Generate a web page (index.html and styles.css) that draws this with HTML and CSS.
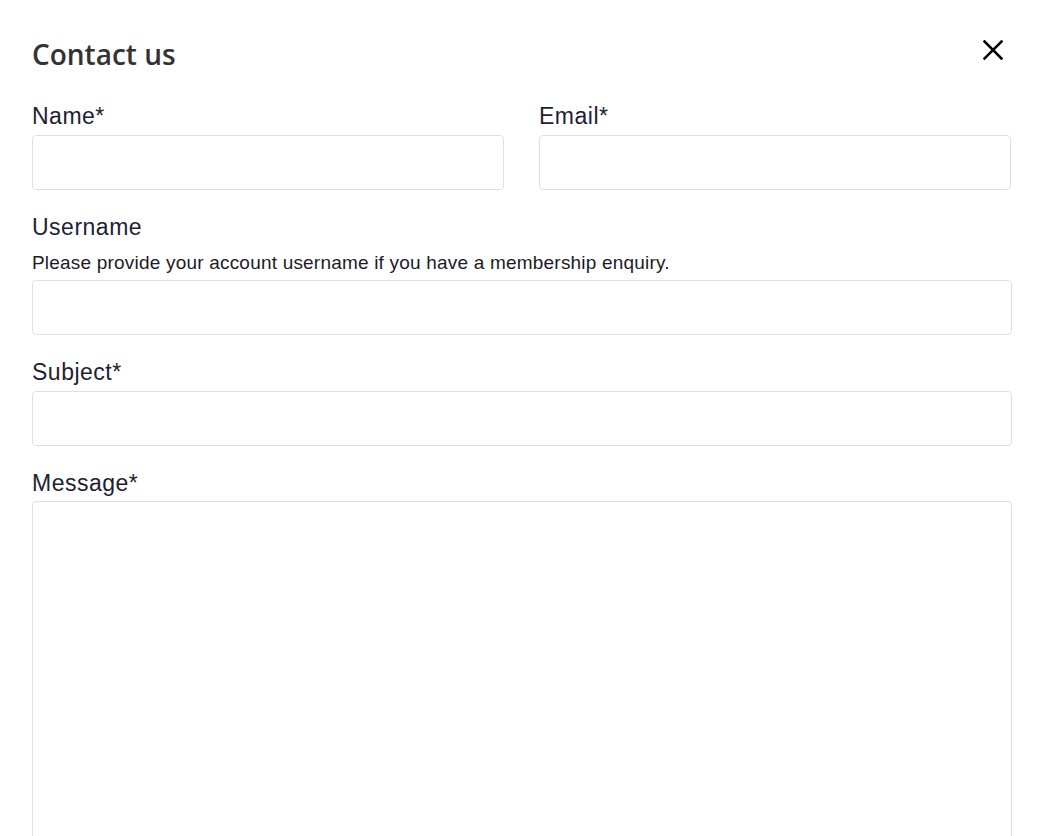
FILE: index.html
```html
<!DOCTYPE html>
<html lang="en">
<head>
<meta charset="utf-8">
<title>Contact us</title>
<link rel="stylesheet" href="styles.css">
</head>
<body>
<div class="modal">
  <header class="modal-header">
    <h1 class="title">Contact us</h1>
    <button class="close" type="button" aria-label="Close">
      <svg width="20" height="20" viewBox="0 0 20 20" aria-hidden="true">
        <path d="M1.5 1.5 L18.5 18.5 M18.5 1.5 L1.5 18.5" stroke="#000" stroke-width="2.5" stroke-linecap="square" fill="none"/>
      </svg>
    </button>
  </header>
  <form class="form">
    <div class="row two">
      <div class="field">
        <label class="label" for="name">Name*</label>
        <input class="input" id="name" type="text">
      </div>
      <div class="field">
        <label class="label" for="email">Email*</label>
        <input class="input" id="email" type="email">
      </div>
    </div>
    <div class="field">
      <label class="label" for="username">Username</label>
      <p class="help">Please provide your account username if you have a membership enquiry.</p>
      <input class="input" id="username" type="text">
    </div>
    <div class="field">
      <label class="label" for="subject">Subject*</label>
      <input class="input" id="subject" type="text">
    </div>
    <div class="field">
      <label class="label label-tight" for="message">Message*</label>
      <textarea class="input textarea" id="message"></textarea>
    </div>
  </form>
</div>
</body>
</html>
```

FILE: styles.css
```css
html, body {
  margin: 0;
  padding: 0;
  background: #fff;
}

body {
  font-family: "Liberation Sans", Arial, sans-serif;
  color: #221e33;
}

.modal {
  padding: 37px 34px 0 32px;
}

.modal-header {
  display: flex;
  justify-content: space-between;
  align-items: flex-start;
  margin-bottom: 32px;
}

.title {
  margin: 0;
  font-family: "Open Sans", sans-serif;
  font-weight: 600;
  font-size: 28px;
  line-height: 34px;
  color: #333;
}

.close {
  border: 0;
  background: none;
  padding: 0;
  margin: 3px 9px 0 0;
  width: 20px;
  height: 20px;
  cursor: pointer;
  display: block;
}

.close svg {
  display: block;
}

.form {
  display: flex;
  flex-direction: column;
  gap: 24px;
}

.row.two {
  display: grid;
  grid-template-columns: 472px 1fr;
  column-gap: 35px;
  padding-right: 1px;
}

.field {
  display: flex;
  flex-direction: column;
}

.label {
  display: block;
  font-size: 23px;
  line-height: 26px;
  letter-spacing: 0.5px;
  margin-bottom: 6px;
  color: #221e33;
}

.label-tight {
  margin-bottom: 5px;
}

.help {
  margin: 6px 0 6px;
  font-size: 19px;
  line-height: 22px;
  letter-spacing: 0.2px;
  color: #1d1a29;
}

.input {
  box-sizing: border-box;
  width: 100%;
  height: 55px;
  border: 1px solid #e0e0e0;
  border-radius: 4px;
  background: #fff;
  padding: 0 12px;
  font-family: inherit;
  font-size: 16px;
  margin: 0;
  outline: none;
}

.textarea {
  height: 400px;
  resize: none;
  padding: 12px;
}
```
